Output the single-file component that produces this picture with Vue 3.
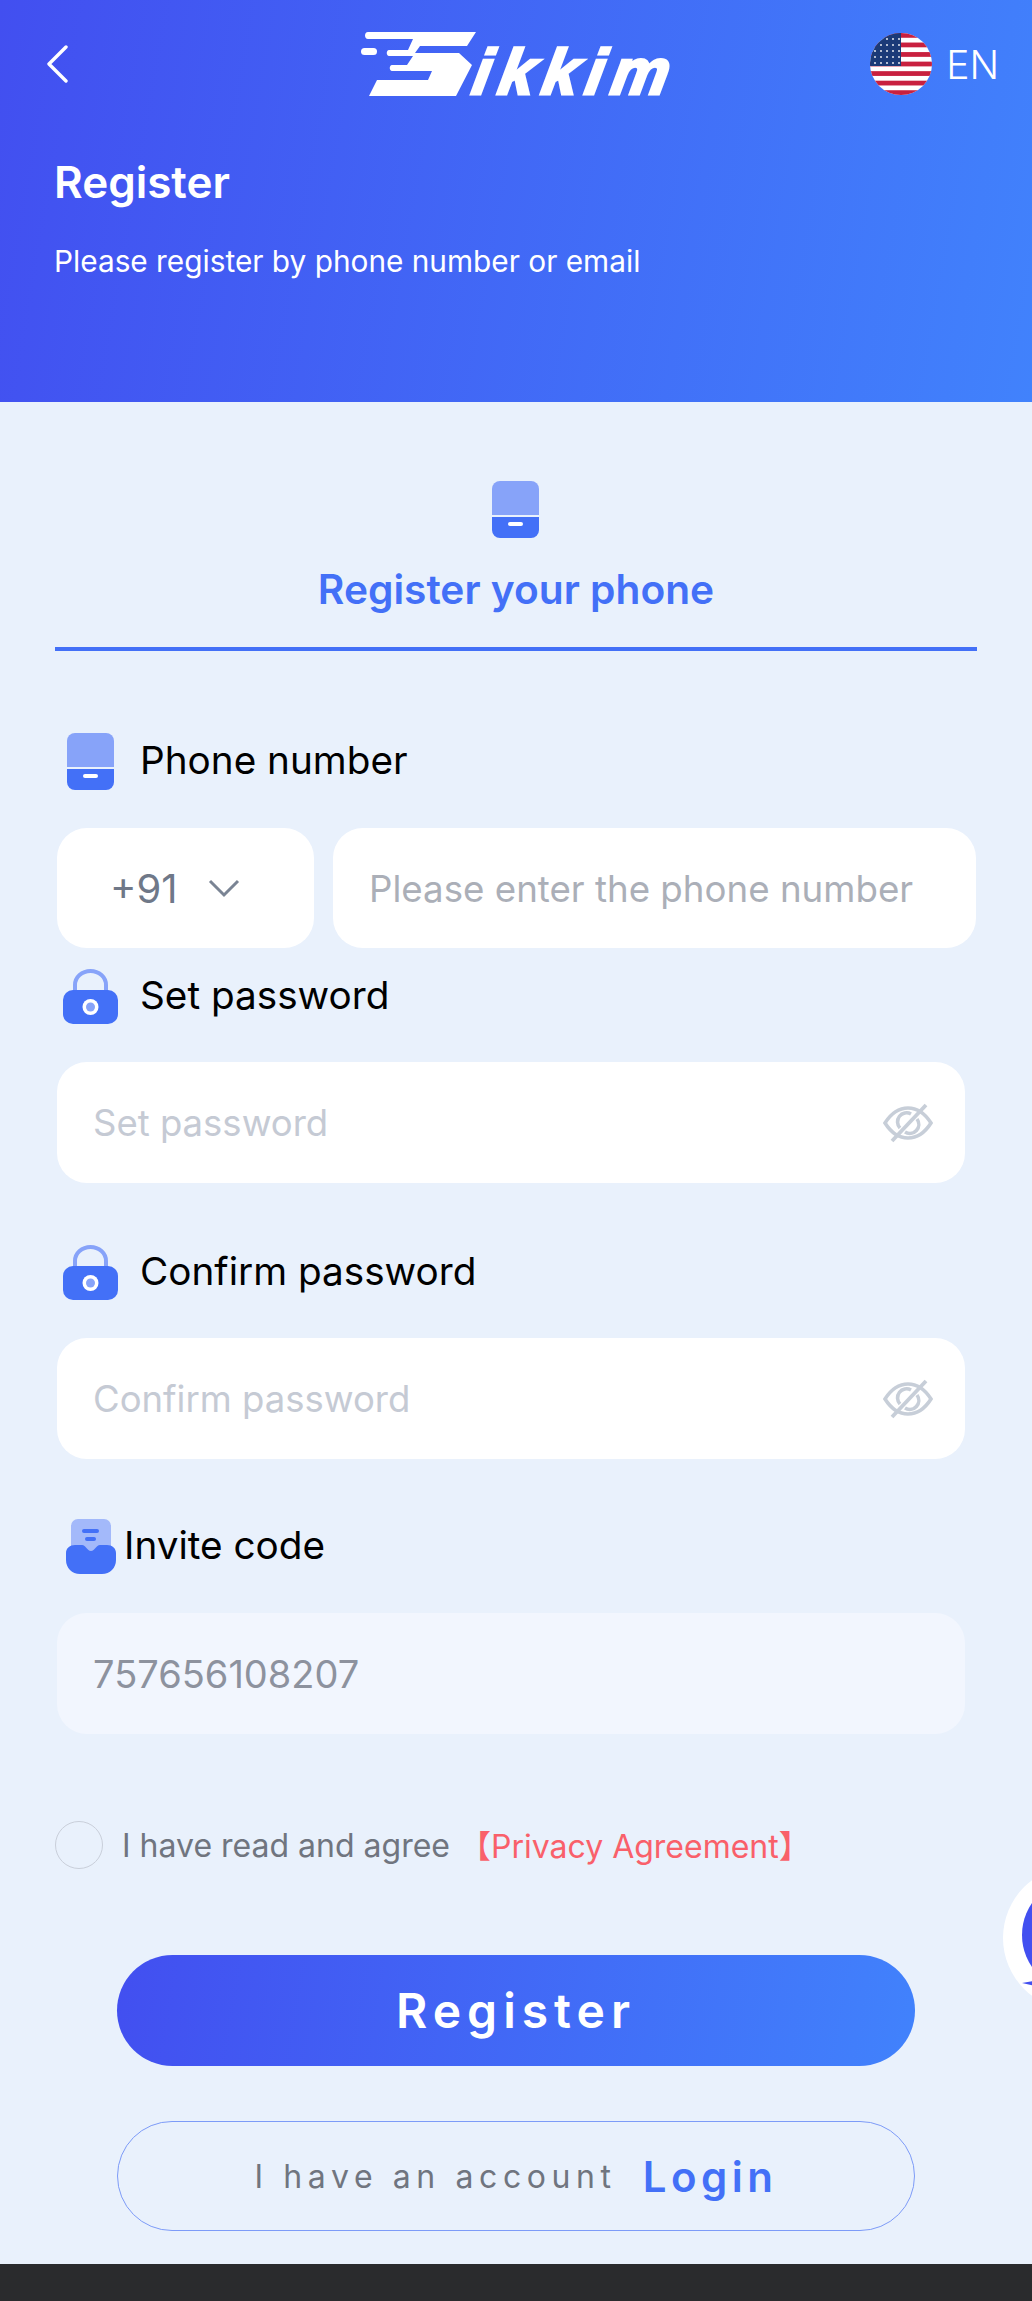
<script setup>
import { ref } from "vue";

const agreed = ref(false);
const stripes = Array.from({ length: 13 }, (_, i) => i);
const stars = [];
for (let row = 0; row < 5; row++) {
  for (let col = 0; col < 5; col++) {
    stars.push({ x: 5 + col * 6, y: 6 + row * 6 });
  }
}
</script>

<template>
  <div class="page">
    <header class="hero">
      <div class="topbar">
        <svg class="back" viewBox="0 0 24 38" fill="none">
          <path d="M21 2 4 19l17 17" stroke="#fff" stroke-width="3.4" stroke-linecap="round" stroke-linejoin="round" />
        </svg>
        <div class="logo">
          <svg class="logo-mark" viewBox="0 0 115 64" fill="#fff">
            <path d="M7 0H115L106 14H59L54 21H98L111 33 95 64H8L16 48H67L71 39H31C28 39 28 33 31 33H46L52 24H28C25 24 25 18 28 18H47L52 7H7C3 7 3 0 7 0Z" />
            <rect x="0" y="16" width="16" height="7" rx="3.5" />
          </svg>
          <span class="logo-text">ikkim</span>
        </div>
        <div class="lang">
          <svg class="flag" viewBox="0 0 62 62">
            <defs>
              <clipPath id="flagClip"><circle cx="31" cy="31" r="31" /></clipPath>
            </defs>
            <g clip-path="url(#flagClip)">
              <rect width="62" height="62" fill="#fff" />
              <rect v-for="i in stripes" :key="i" v-show="i % 2 === 0" x="0" :y="i * 4.77" width="62" height="4.77" fill="#c8203f" />
              <rect width="31" height="33" fill="#1b3a78" />
              <circle v-for="(s, i) in stars" :key="i" :cx="s.x" :cy="s.y" r="1.1" fill="#d8dde8" />
            </g>
          </svg>
          <span>EN</span>
        </div>
      </div>
      <h1 class="title">Register</h1>
      <p class="subtitle">Please register by phone number or email</p>
    </header>

    <main class="content">
      <div class="tab">
        <svg class="tab-icon" viewBox="0 0 47 57">
          <path d="M8 0h31a8 8 0 0 1 8 8v26H0V8a8 8 0 0 1 8-8Z" fill="#87a3f9" />
          <path d="M0 36h47v13a8 8 0 0 1-8 8H8a8 8 0 0 1-8-8Z" fill="#4370f7" />
          <rect x="16" y="41" width="15" height="4" rx="2" fill="#fff" />
        </svg>
        <span>Register your phone</span>
      </div>

      <form class="form" @submit.prevent>
        <label class="label first">
          <svg class="phone-icon" viewBox="0 0 47 57">
            <path d="M8 0h31a8 8 0 0 1 8 8v26H0V8a8 8 0 0 1 8-8Z" fill="#87a3f9" />
            <path d="M0 36h47v13a8 8 0 0 1-8 8H8a8 8 0 0 1-8-8Z" fill="#4370f7" />
            <rect x="16" y="41" width="15" height="4" rx="2" fill="#fff" />
          </svg>
          <span>Phone number</span>
        </label>
        <div class="phone-row">
          <div class="code">
            <span>+91</span>
            <svg class="caret" viewBox="0 0 32 20" fill="none">
              <path d="M2 3l14 14L30 3" stroke="#7a8494" stroke-width="3" />
            </svg>
          </div>
          <input class="box phone-input" type="tel" placeholder="Please enter the phone number" />
        </div>

        <label class="label pass-label">
          <svg class="lock-icon" viewBox="0 0 55 55">
            <path d="M12 24V16a15.500 14 0 0 1 31 0v8" fill="none" stroke="#87a3f9" stroke-width="4" />
            <rect x="0" y="21" width="55" height="34" rx="10" fill="#4370f7" />
            <circle cx="27.500" cy="38" r="8" fill="#fff" />
            <circle cx="27.500" cy="38" r="4.500" fill="#87a3f9" />
          </svg>
          <span>Set password</span>
        </label>
        <div class="box pass-box">
          <input type="password" placeholder="Set password" />
          <svg class="eye" viewBox="0 0 50 40" fill="none">
            <path d="M2 20C9 9 17 5 25 5s16 4 23 15c-7 11-15 15-23 15S9 31 2 20Z" stroke="#c7ced8" stroke-width="3.600" />
            <path d="M17 25a9 9 0 0 1 11-14M34 16a9 9 0 0 1-12 13" stroke="#c7ced8" stroke-width="3.600" />
            <path d="M9 38 43 2" stroke="#c7ced8" stroke-width="3.800" />
          </svg>
        </div>

        <label class="label">
          <svg class="lock-icon" viewBox="0 0 55 55">
            <path d="M12 24V16a15.500 14 0 0 1 31 0v8" fill="none" stroke="#87a3f9" stroke-width="4" />
            <rect x="0" y="21" width="55" height="34" rx="10" fill="#4370f7" />
            <circle cx="27.500" cy="38" r="8" fill="#fff" />
            <circle cx="27.500" cy="38" r="4.500" fill="#87a3f9" />
          </svg>
          <span>Confirm password</span>
        </label>
        <div class="box pass-box">
          <input type="password" placeholder="Confirm password" />
          <svg class="eye" viewBox="0 0 50 40" fill="none">
            <path d="M2 20C9 9 17 5 25 5s16 4 23 15c-7 11-15 15-23 15S9 31 2 20Z" stroke="#c7ced8" stroke-width="3.600" />
            <path d="M17 25a9 9 0 0 1 11-14M34 16a9 9 0 0 1-12 13" stroke="#c7ced8" stroke-width="3.600" />
            <path d="M9 38 43 2" stroke="#c7ced8" stroke-width="3.800" />
          </svg>
        </div>

        <label class="label invite-label">
          <svg class="invite-icon" viewBox="0 0 50 55">
            <path d="M12 0h26a7 7 0 0 1 7 7v26H5V7a7 7 0 0 1 7-7Z" fill="#a3b9fa" />
            <rect x="16" y="10" width="17" height="4" rx="2" fill="#4370f7" />
            <rect x="19" y="18" width="11" height="4" rx="2" fill="#4370f7" />
            <path d="M0 34c0-5 4-8 9-8h7c4 0 5 6 9 6s5-6 9-6h7c5 0 9 3 9 8v7c0 8-6 14-14 14H14C6 55 0 49 0 41Z" fill="#4370f7" />
          </svg>
          <span>Invite code</span>
        </label>
        <div class="box invite-box">
          <input type="text" value="757656108207" readonly />
        </div>

        <div class="agree">
          <button type="button" class="check" :class="{ on: agreed }" @click="agreed = !agreed"></button>
          <span class="agree-text">I have read and agree</span>
          <span class="agree-link">【Privacy Agreement】</span>
        </div>

        <button type="submit" class="btn-register">Register</button>
        <button type="button" class="btn-login">
          <span class="have">I have an account</span>
          <span class="login">Login</span>
        </button>
      </form>

      <div class="float-btn"><i></i><b></b></div>
    </main>

    <footer class="bottom"></footer>
  </div>
</template>

<style>
html,
body {
  margin: 0;
  background: #e9f1fc;
}
</style>

<style scoped>
.page {
  position: relative;
  width: 1032px;
  height: 2301px;
  overflow: hidden;
  display: flex;
  flex-direction: column;
  background: #e9f1fc;
  font-family: Inter, "Noto Sans", sans-serif;
  color: #000;
}

.hero {
  height: 402px;
  box-sizing: border-box;
  padding-top: 32px;
  color: #fff;
  background: linear-gradient(100deg, #424ff0, #4182fc);
}

.topbar {
  display: grid;
  grid-template-columns: 1fr auto 1fr;
  align-items: center;
  padding: 0 33px 0 34px;
}

.back {
  width: 24px;
  height: 38px;
  margin-left: 11px;
}

.logo {
  display: flex;
  align-items: flex-end;
  height: 64px;
  margin-left: 2px;
}

.logo-mark {
  width: 115px;
  height: 64px;
}

.logo-text {
  margin-left: -6px;
  font-family: "Liberation Sans", sans-serif;
  font-size: 64px;
  font-weight: 700;
  font-style: italic;
  line-height: 48px;
  height: 48px;
  letter-spacing: 8px;
  -webkit-text-stroke: 3px #fff;
  transform: skewX(-10deg);
  transform-origin: bottom left;
}

.lang {
  display: flex;
  align-items: center;
  justify-content: flex-end;
  gap: 14px;
  font-size: 39px;
  font-weight: 300;
}

.flag {
  width: 62px;
  height: 62px;
}

.title {
  margin: 60px 0 0 54px;
  font-size: 44px;
  line-height: 52px;
  font-weight: 600;
}

.subtitle {
  margin: 35px 0 0 54px;
  font-size: 29.800px;
  line-height: 36px;
  font-weight: 400;
}

.content {
  flex: 1;
  position: relative;
}

.tab {
  display: flex;
  flex-direction: column;
  align-items: center;
  height: 170px;
  box-sizing: border-box;
  margin: 79px 55px 0;
  border-bottom: 4px solid #4370f7;
  color: #4370f7;
  font-size: 40.700px;
  font-weight: 600;
}

.tab-icon {
  width: 47px;
  height: 57px;
  margin-right: 2px;
  margin-bottom: 27px;
}

.form {
  padding-left: 57px;
}

.label {
  display: flex;
  align-items: center;
  height: 56px;
  margin: 61px 0 38px;
  font-size: 38.700px;
  font-weight: 400;
}

.label span {
  margin-top: -2px;
}

.label.first {
  margin-top: 82px;
  margin-bottom: 39px;
}

.label.pass-label {
  margin-top: 20px;
}

.label.invite-label {
  margin-top: 59px;
  margin-bottom: 39px;
}

.phone-icon {
  width: 47px;
  height: 57px;
  margin: 0 26px 0 10px;
}

.lock-icon {
  width: 55px;
  height: 55px;
  margin: 0 22px 0 6px;
}

.invite-icon {
  width: 50px;
  height: 55px;
  margin: 0 8px 0 9px;
}

.phone-row {
  display: flex;
  gap: 19px;
  width: 919px;
}

.code {
  display: flex;
  align-items: center;
  width: 257px;
  height: 120px;
  flex: none;
  box-sizing: border-box;
  padding-left: 53px;
  border-radius: 30px;
  background: #fff;
  color: #6f7888;
  font-size: 40px;
}

.caret {
  width: 32px;
  height: 20px;
  margin-left: 30px;
}

.box {
  display: flex;
  align-items: center;
  box-sizing: border-box;
  width: 908px;
  height: 121px;
  border-radius: 30px;
  background: #fff;
}

.phone-input {
  flex: 1;
  min-width: 0;
  width: auto;
  height: 120px;
  border: 0;
  outline: 0;
  padding: 0 36px;
  font: 400 36.700px Inter, sans-serif;
}

.phone-input::placeholder {
  color: #abafb8;
  opacity: 1;
}

.box input {
  flex: 1;
  min-width: 0;
  border: 0;
  outline: 0;
  padding: 0 0 0 36px;
  background: transparent;
  font: 400 36.500px Inter, sans-serif;
}

.pass-box input::placeholder {
  color: #c5cad4;
  opacity: 1;
}

.eye {
  width: 50px;
  height: 40px;
  margin-right: 32px;
}

.invite-box {
  background: #f2f6fe;
}

.invite-box input {
  color: #8d929e;
  font-size: 38px;
}

.agree {
  display: flex;
  align-items: center;
  margin: 87px 0 0 -2px;
  height: 48px;
  font-size: 32px;
}

.check {
  width: 48px;
  height: 48px;
  padding: 0;
  margin-right: 19px;
  border: 1.500px solid #c9cfda;
  border-radius: 50%;
  background: transparent;
}

.check.on {
  background: #4370f7;
}

.agree-text {
  color: #70757f;
}

.agree-link {
  margin: -3px 0 0 9px;
  color: #f9606a;
  font-size: 32px;
  font-family: Inter, "Noto Sans CJK SC", sans-serif;
}

.btn-register,
.btn-login {
  display: flex;
  align-items: center;
  justify-content: center;
  width: 798px;
  margin-left: 60px;
  border-radius: 60px;
  box-sizing: border-box;
  font-family: Inter, sans-serif;
}

.btn-register {
  height: 111px;
  margin-top: 86px;
  border: 0;
  background: linear-gradient(100deg, #424ff0, #4182fc);
  color: #fff;
  font-size: 48px;
  font-weight: 600;
  letter-spacing: 6px;
}

.btn-login {
  height: 110px;
  margin-top: 55px;
  border: 1px solid #7d9bf8;
  background: transparent;
}

.have {
  color: #70757f;
  font-size: 32px;
  letter-spacing: 5.600px;
}

.login {
  margin-left: 26px;
  color: #4370f7;
  font-size: 42px;
  font-weight: 600;
  letter-spacing: 4.500px;
}

.float-btn {
  position: absolute;
  left: 1003px;
  top: 1464px;
  width: 144px;
  height: 144px;
  border-radius: 50%;
  background: #fff;
}

.float-btn i {
  position: absolute;
  left: 19px;
  top: 13px;
  width: 112px;
  height: 112px;
  border-radius: 50%;
  background: #424ff0;
}

.float-btn b {
  position: absolute;
  left: 19px;
  top: 112px;
  width: 30px;
  height: 12px;
  background: #424ff0;
  clip-path: polygon(0 42%, 100% 0, 100% 100%);
}

.bottom {
  height: 37px;
  flex: none;
  background: #2a2b2d;
}
</style>
